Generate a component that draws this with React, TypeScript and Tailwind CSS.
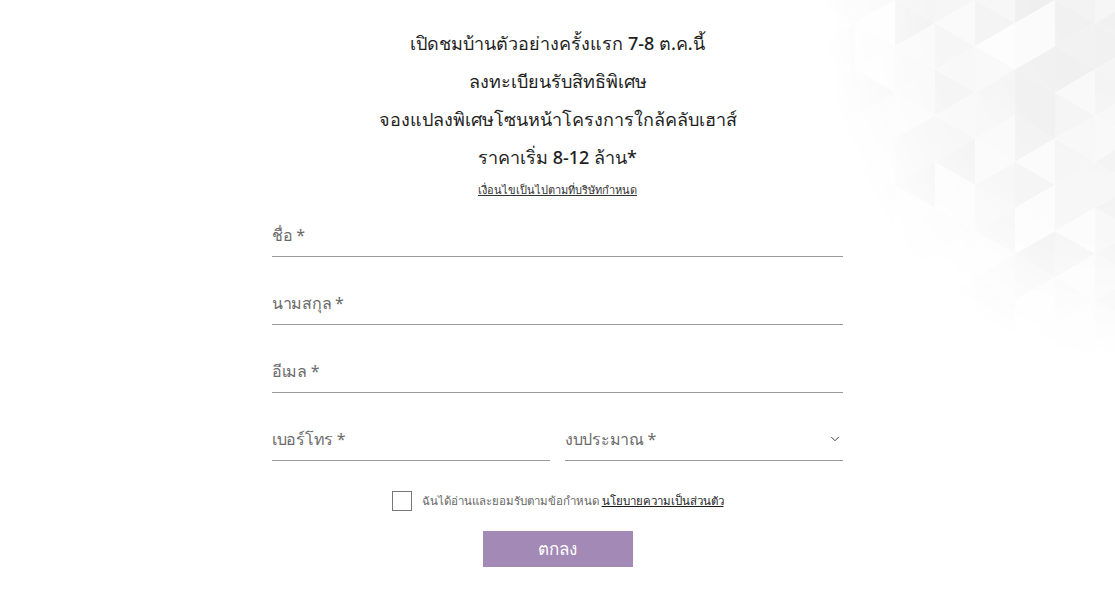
import { ChevronDown } from "lucide-react";

const W = 40;
const H = (2 * W) / Math.sqrt(3);

// เลขสุ่มแบบคงที่ สำหรับเฉดของสามเหลี่ยม
const rand = (n: number) => {
  const x = Math.sin(n * 12.9898 + 78.233) * 43758.5453;
  return x - Math.floor(x);
};

const TrianglePattern = () => {
  const tris: { points: string; o: number }[] = [];
  for (let c = 0; c < 8; c++) {
    const x0 = c * W;
    const off = c % 2 === 0 ? 0 : -H / 2;
    for (let r = -1; r < 9; r++) {
      const y = off + r * H;
      const a = `${x0},${y} ${x0},${y + H} ${x0 + W},${y + H / 2}`;
      const b = `${x0 + W},${y + H / 2} ${x0 + W},${y + H * 1.5} ${x0},${y + H}`;
      tris.push({ points: a, o: 0.01 + rand(c * 31 + r * 7) * 0.06 });
      tris.push({ points: b, o: 0.01 + rand(c * 17 + r * 13 + 5) * 0.06 });
    }
  }
  return (
    <svg width="300" height="370" viewBox="0 0 300 370" className="absolute top-0 right-0 pointer-events-none">
      <defs>
        <radialGradient id="fade" cx="1" cy="0" r="1.05">
          <stop offset="0" stopColor="#fff" stopOpacity="1" />
          <stop offset="0.6" stopColor="#fff" stopOpacity="0.7" />
          <stop offset="0.93" stopColor="#fff" stopOpacity="0" />
        </radialGradient>
        <mask id="m">
          <rect width="300" height="370" fill="url(#fade)" />
        </mask>
      </defs>
      <g mask="url(#m)">
        {tris.map((t, i) => (
          <polygon key={i} points={t.points} fill="#000" fillOpacity={t.o} />
        ))}
      </g>
    </svg>
  );
};

const Field = ({ label, className = "", chevron = false }: { label: string; className?: string; chevron?: boolean }) => (
  <div className={`h-[48px] flex items-end justify-between pb-[9px] border-b border-[#9a9a9a] ${className}`}>
    <span className="text-[16px] leading-[24px] text-[#6b6b6b] tracking-[-0.3px]">{label}</span>
    {chevron && <ChevronDown size={14} strokeWidth={1.6} className="text-[#333] mr-[1px] mb-[5px]" />}
  </div>
);

export default function App() {
  return (
    <div className="relative w-full h-[593px] bg-white overflow-hidden" style={{ fontFamily: '"Noto Sans", "Liberation Sans", sans-serif' }}>
      <TrianglePattern />
      <div className="relative mx-auto w-[571px] pt-[24px]">
        <div className="text-center text-[18px] leading-[38px] font-medium text-[#1e1e1e]">
          <p>เปิดชมบ้านตัวอย่างครั้งแรก 7-8 ต.ค.นี้</p>
          <p>ลงทะเบียนรับสิทธิพิเศษ</p>
          <p>จองแปลงพิเศษโซนหน้าโครงการใกล้คลับเฮาส์</p>
          <p>ราคาเริ่ม 8-12 ล้าน*</p>
        </div>
        <div className="text-center mt-[6px] text-[11px] leading-[16px]">
          <a className="text-[#333] underline">เงื่อนไขเป็นไปตามที่บริษัทกำหนด</a>
        </div>

        <Field label="ชื่อ *" className="mt-[11px]" />
        <Field label="นามสกุล *" className="mt-[20px]" />
        <Field label="อีเมล *" className="mt-[20px]" />
        <div className="flex gap-[15px] mt-[20px]">
          <Field label="เบอร์โทร *" className="flex-1" />
          <Field label="งบประมาณ *" className="flex-1" chevron />
        </div>

        <div className="flex items-center justify-center gap-[10px] mt-[30px] text-[11.5px] leading-[20px]">
          <span className="w-[20px] h-[20px] border border-[#777] bg-white" />
          <span className="text-[#666]">
            ฉันได้อ่านและยอมรับตามข้อกำหนด{" "}
            <a className="text-[#1e1e1e] underline font-medium">นโยบายความเป็นส่วนตัว</a>
          </span>
        </div>

        <div className="flex justify-center mt-[20px]">
          <button className="w-[150px] h-[36px] bg-[#a389b5] text-white text-[17px]">ตกลง</button>
        </div>
      </div>
    </div>
  );
}
